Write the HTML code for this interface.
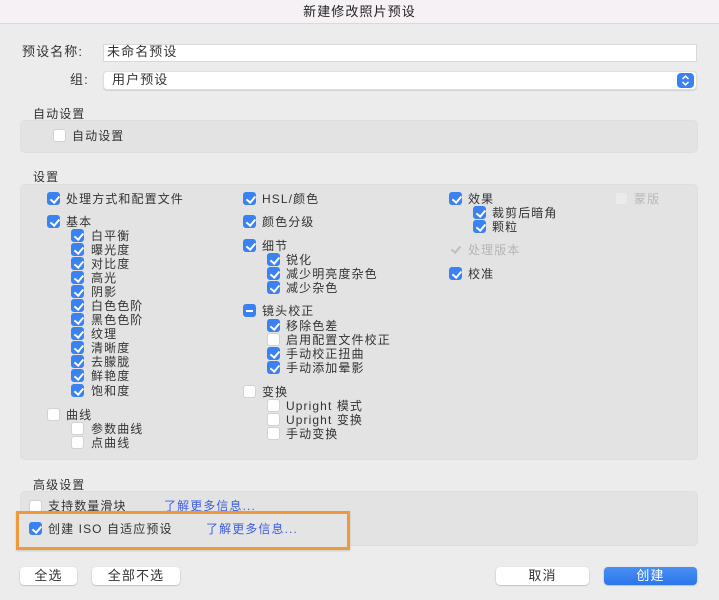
<!DOCTYPE html>
<html><head><meta charset="utf-8"><style>
*{box-sizing:border-box;margin:0;padding:0}
body{width:719px;height:600px;background:#ececec;position:relative;overflow:hidden;font-family:"Liberation Sans","Noto Sans CJK SC",sans-serif;font-size:12px;color:#333;letter-spacing:1.1px}
.a{position:absolute;white-space:nowrap;line-height:14px}
.tb{position:absolute;left:0;top:0;width:719px;height:24px;background:#f5f1f5;border-bottom:1px solid #dadada;text-align:center;line-height:24px;font-size:13px;color:#222}
.box{position:absolute;left:20px;width:678px;background:#e3e3e3;border-radius:5px;border:1px solid #dedede}
.cb{position:absolute;width:13px;height:13px;border-radius:3px;background:#fff;border:1px solid #d2d2d2}
.ck{background:#3a82f1;border-color:#3a82f1}
.ck::after{content:"";position:absolute;left:3.5px;top:0.5px;width:3.5px;height:7px;border:solid #fff;border-width:0 2px 2px 0;transform:rotate(40deg)}
.mn{background:#3a82f1;border-color:#3a82f1}
.mn::after{content:"";position:absolute;left:2px;top:5px;width:7px;height:2px;background:#fff}
.dis{background:#ebebeb;border-color:#e2e2e2}
.dck{background:transparent;border:none}
.dck::after{content:"";position:absolute;left:4px;top:0.5px;width:3.5px;height:7px;border:solid #bdbdbd;border-width:0 2px 2px 0;transform:rotate(40deg)}
.btn{position:absolute;top:567px;height:18px;background:#fff;border-radius:4px;box-shadow:0 0.5px 1.5px rgba(0,0,0,.3);text-align:center;line-height:18px;font-size:13px}
.inp{position:absolute;left:103px;width:594px;background:#fff;border:1px solid #d8d8d8}
.lk{color:#3b5ee0}
</style></head><body>
<div class="tb">新建修改照片预设</div>

<div class="a" style="left:22px;top:45px;font-size:13px">预设名称:</div>
<div class="inp" style="top:44px;height:18px"></div>
<div class="a" style="left:107px;top:45px;font-size:13px">未命名预设</div>
<div class="a" style="left:70px;top:73px;font-size:13px">组:</div>
<div class="inp" style="top:71px;height:19px;border-radius:4px;box-shadow:0 0.5px 1px rgba(0,0,0,.2);border-color:#e0e0e0"></div>
<div class="a" style="left:112px;top:73px;font-size:13px">用户预设</div>
<div style="position:absolute;left:677px;top:73px;width:17px;height:15px;background:#3a82f1;border-radius:4px">
<svg width="17" height="15" viewBox="0 0 17 15"><path d="M5.5 6 L8.5 3.2 L11.5 6 M5.5 9 L8.5 11.8 L11.5 9" fill="none" stroke="#fff" stroke-width="1.5"/></svg></div>

<div class="a" style="left:33px;top:107px">自动设置</div>
<div class="box" style="top:120px;height:33px"></div>
<div class="cb" style="left:53px;top:129px"></div><div class="a" style="left:72px;top:129px">自动设置</div>

<div class="a" style="left:33px;top:170px">设置</div>
<div class="box" style="top:184px;height:276px"></div>

<div class="cb ck" style="left:47px;top:192px"></div><div class="a" style="left:66px;top:192px">处理方式和配置文件</div>
<div class="cb ck" style="left:47px;top:215px"></div><div class="a" style="left:66px;top:215px">基本</div>
<div class="cb ck" style="left:71px;top:229px"></div><div class="a" style="left:91px;top:229px">白平衡</div>
<div class="cb ck" style="left:71px;top:243px"></div><div class="a" style="left:91px;top:243px">曝光度</div>
<div class="cb ck" style="left:71px;top:257px"></div><div class="a" style="left:91px;top:257px">对比度</div>
<div class="cb ck" style="left:71px;top:271px"></div><div class="a" style="left:91px;top:271px">高光</div>
<div class="cb ck" style="left:71px;top:285px"></div><div class="a" style="left:91px;top:285px">阴影</div>
<div class="cb ck" style="left:71px;top:299px"></div><div class="a" style="left:91px;top:299px">白色色阶</div>
<div class="cb ck" style="left:71px;top:313px"></div><div class="a" style="left:91px;top:313px">黑色色阶</div>
<div class="cb ck" style="left:71px;top:327px"></div><div class="a" style="left:91px;top:327px">纹理</div>
<div class="cb ck" style="left:71px;top:341px"></div><div class="a" style="left:91px;top:341px">清晰度</div>
<div class="cb ck" style="left:71px;top:355px"></div><div class="a" style="left:91px;top:355px">去朦胧</div>
<div class="cb ck" style="left:71px;top:369px"></div><div class="a" style="left:91px;top:369px">鲜艳度</div>
<div class="cb ck" style="left:71px;top:384px"></div><div class="a" style="left:91px;top:384px">饱和度</div>
<div class="cb" style="left:47px;top:408px"></div><div class="a" style="left:66px;top:408px">曲线</div>
<div class="cb" style="left:71px;top:422px"></div><div class="a" style="left:91px;top:422px">参数曲线</div>
<div class="cb" style="left:71px;top:436px"></div><div class="a" style="left:91px;top:436px">点曲线</div>

<div class="cb ck" style="left:243px;top:192px"></div><div class="a" style="left:262px;top:192px">HSL/颜色</div>
<div class="cb ck" style="left:243px;top:215px"></div><div class="a" style="left:262px;top:215px">颜色分级</div>
<div class="cb ck" style="left:243px;top:239px"></div><div class="a" style="left:262px;top:239px">细节</div>
<div class="cb ck" style="left:267px;top:253px"></div><div class="a" style="left:286px;top:253px">锐化</div>
<div class="cb ck" style="left:267px;top:267px"></div><div class="a" style="left:286px;top:267px">减少明亮度杂色</div>
<div class="cb ck" style="left:267px;top:281px"></div><div class="a" style="left:286px;top:281px">减少杂色</div>
<div class="cb mn" style="left:243px;top:304px"></div><div class="a" style="left:262px;top:304px">镜头校正</div>
<div class="cb ck" style="left:267px;top:319px"></div><div class="a" style="left:286px;top:319px">移除色差</div>
<div class="cb" style="left:267px;top:333px"></div><div class="a" style="left:286px;top:333px">启用配置文件校正</div>
<div class="cb ck" style="left:267px;top:347px"></div><div class="a" style="left:286px;top:347px">手动校正扭曲</div>
<div class="cb ck" style="left:267px;top:361px"></div><div class="a" style="left:286px;top:361px">手动添加晕影</div>
<div class="cb" style="left:243px;top:385px"></div><div class="a" style="left:262px;top:385px">变换</div>
<div class="cb" style="left:267px;top:399px"></div><div class="a" style="left:286px;top:399px">Upright 模式</div>
<div class="cb" style="left:267px;top:413px"></div><div class="a" style="left:286px;top:413px">Upright 变换</div>
<div class="cb" style="left:267px;top:427px"></div><div class="a" style="left:286px;top:427px">手动变换</div>

<div class="cb ck" style="left:449px;top:192px"></div><div class="a" style="left:468px;top:192px">效果</div>
<div class="cb ck" style="left:473px;top:206px"></div><div class="a" style="left:492px;top:206px">裁剪后暗角</div>
<div class="cb ck" style="left:473px;top:220px"></div><div class="a" style="left:492px;top:220px">颗粒</div>
<div class="cb dck" style="left:449px;top:243px"></div><div class="a" style="left:468px;top:243px;color:#b5b5b5">处理版本</div>
<div class="cb ck" style="left:449px;top:267px"></div><div class="a" style="left:468px;top:267px">校准</div>
<div class="cb dis" style="left:615px;top:192px"></div><div class="a" style="left:634px;top:192px;color:#b8b8b8">蒙版</div>

<div class="a" style="left:33px;top:478px">高级设置</div>
<div class="box" style="top:491px;height:55px"></div>
<div class="cb" style="left:29px;top:500px"></div><div class="a" style="left:48px;top:499px">支持数量滑块</div>
<div class="a lk" style="left:164px;top:499px">了解更多信息...</div>
<div style="position:absolute;left:16px;top:511px;width:334px;height:39px;border:3px solid #ee9a3c;background:#e4e4e4;box-shadow:0 1px 2px rgba(0,0,0,.15)"></div>
<div class="cb ck" style="left:29px;top:522px"></div><div class="a" style="left:48px;top:522px">创建 ISO 自适应预设</div>
<div class="a lk" style="left:206px;top:522px">了解更多信息...</div>

<div class="btn" style="left:20px;width:57px">全选</div>
<div class="btn" style="left:92px;width:88px">全部不选</div>
<div class="btn" style="left:496px;width:93px">取消</div>
<div class="btn" style="left:604px;width:93px;color:#fff;background:linear-gradient(#4a8ff5,#2b76ec)">创建</div>
</body></html>
